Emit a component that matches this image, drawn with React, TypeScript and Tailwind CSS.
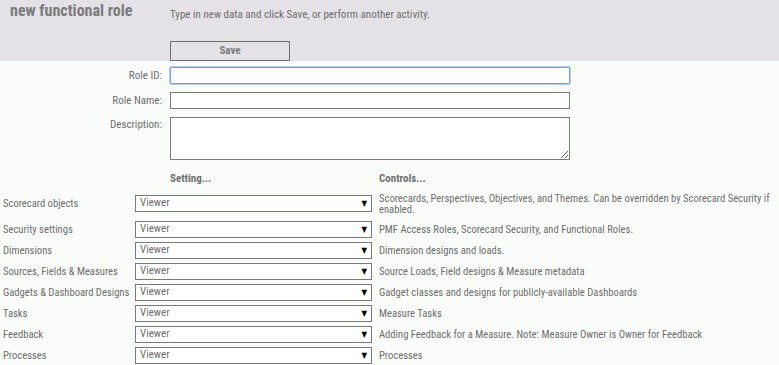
import React from "react"

const font = {
  fontFamily: '"Roboto Condensed", "Liberation Sans Narrow", "Arial Narrow", "DejaVu Sans Condensed", Roboto, sans-serif',
}

const rows = [
  {
    label: "Scorecard objects",
    controls: "Scorecards, Perspectives, Objectives, and Themes. Can be overridden by Scorecard Security if enabled.",
  },
  { label: "Security settings", controls: "PMF Access Roles, Scorecard Security, and Functional Roles." },
  { label: "Dimensions", controls: "Dimension designs and loads." },
  { label: "Sources, Fields & Measures", controls: "Source Loads, Field designs & Measure metadata" },
  { label: "Gadgets & Dashboard Designs", controls: "Gadget classes and designs for publicly-available Dashboards" },
  { label: "Tasks", controls: "Measure Tasks" },
  { label: "Feedback", controls: "Adding Feedback for a Measure. Note: Measure Owner is Owner for Feedback" },
  { label: "Processes", controls: "Processes" },
]

function SelectBox() {
  return (
    <div className="flex h-[17px] w-[237px] shrink-0 items-center justify-between border border-[#7a7a7a] bg-white pl-[4px] pr-[4px] text-[11px] text-[#6e6e6e]">
      <span>Viewer</span>
      <span className="text-[8px] text-black">▼</span>
    </div>
  )
}

export default function App() {
  return (
    <div className="h-[365px] w-[779px] overflow-hidden bg-[#fbfdfa] text-[#6e6e6e]" style={font}>
      <div className="flex h-[61px] flex-col bg-[#e4e2e6]">
        <div className="flex h-[38px] items-start">
          <h1 className="w-[170px] pl-[10px] pt-[1px] text-[16px] font-bold leading-[20px] text-[#7b7b7b]">
            new functional role
          </h1>
          <p className="pt-[8px] text-[11px] leading-[14px]">Type in new data and click Save, or perform another activity.</p>
        </div>
        <div className="pl-[170px]">
          <button className="h-[20px] w-[120px] border border-[#6f6f6f] bg-[#e4e2e6] text-[11px] font-bold leading-[18px] text-[#7b7b7b]">
            Save
          </button>
        </div>
      </div>

      <div className="mt-[6px] flex flex-col gap-[8px]">
        <div className="flex h-[17px] items-center">
          <label className="w-[162px] text-right text-[11px] leading-[13px]">Role ID:</label>
          <input className="ml-[8px] h-[17px] w-[400px] rounded-[1px] border border-[#6f9fe8] bg-white outline outline-1 outline-[#b5cdf3]" />
        </div>
        <div className="flex h-[17px] items-center">
          <label className="w-[162px] text-right text-[11px] leading-[13px]">Role Name:</label>
          <input className="ml-[8px] h-[17px] w-[400px] border border-[#7a7a7a] bg-white" />
        </div>
        <div className="flex items-start">
          <label className="w-[162px] pt-[1px] text-right text-[11px] leading-[13px]">Description:</label>
          <textarea className="ml-[8px] block h-[43px] w-[400px] resize border border-[#7a7a7a] bg-white" />
        </div>
      </div>

      <div className="mt-[12px] flex h-[13px] text-[11px] font-bold leading-[13px]">
        <div className="w-[170px]" />
        <div className="w-[209px]">Setting...</div>
        <div>Controls...</div>
      </div>

      <div className="mt-[10px] flex flex-col">
        {rows.map((r, i) => (
          <div
            key={r.label}
            className={`flex h-[17px] items-center text-[10.6px] ${i === 0 ? "mb-[9px]" : "mb-[4px]"}`}
          >
            <div className="w-[135px] shrink-0 pl-[3px] leading-[13px]">{r.label}</div>
            <SelectBox />
            <div className="flex-1 pl-[7px] leading-[11px]">{r.controls}</div>
          </div>
        ))}
      </div>
    </div>
  )
}
